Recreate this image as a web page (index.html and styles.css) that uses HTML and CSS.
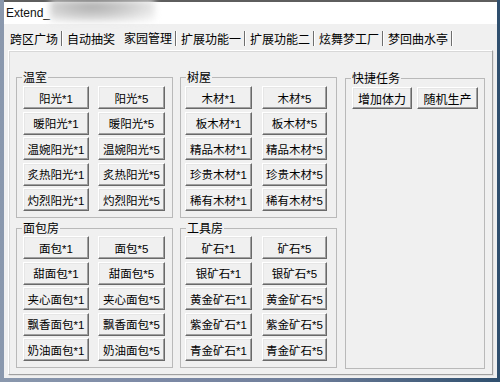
FILE: index.html
```html
<!DOCTYPE html>
<html lang="zh-CN">
<head>
<meta charset="utf-8">
<title>Extend</title>
<link rel="stylesheet" href="styles.css">
</head>
<body>
<div class="window">
  <div class="titlebar">
    <span class="title">Extend_</span>
    <span class="blur"></span>
  </div>
  <div class="tabs">
    <span class="tab sep">跨区广场</span>
    <span class="tab">自动抽奖</span>
    <span class="tab sel sep">家园管理</span>
    <span class="tab sep">扩展功能一</span>
    <span class="tab sep">扩展功能二</span>
    <span class="tab sep">炫舞梦工厂</span>
    <span class="tab sep">梦回曲水亭</span>
  </div>
  <div class="panel">
    <div class="col col1">
      <fieldset class="group g1">
        <legend>温室</legend>
        <div class="grid">
          <button class="btn">阳光*1</button><button class="btn">阳光*5</button>
          <button class="btn">暖阳光*1</button><button class="btn">暖阳光*5</button>
          <button class="btn">温婉阳光*1</button><button class="btn">温婉阳光*5</button>
          <button class="btn">炙热阳光*1</button><button class="btn">炙热阳光*5</button>
          <button class="btn">灼烈阳光*1</button><button class="btn">灼烈阳光*5</button>
        </div>
      </fieldset>
      <fieldset class="group g2">
        <legend>面包房</legend>
        <div class="grid">
          <button class="btn">面包*1</button><button class="btn">面包*5</button>
          <button class="btn">甜面包*1</button><button class="btn">甜面包*5</button>
          <button class="btn">夹心面包*1</button><button class="btn">夹心面包*5</button>
          <button class="btn">飘香面包*1</button><button class="btn">飘香面包*5</button>
          <button class="btn">奶油面包*1</button><button class="btn">奶油面包*5</button>
        </div>
      </fieldset>
    </div>
    <div class="col col2">
      <fieldset class="group g1">
        <legend>树屋</legend>
        <div class="grid">
          <button class="btn">木材*1</button><button class="btn">木材*5</button>
          <button class="btn">板木材*1</button><button class="btn">板木材*5</button>
          <button class="btn">精品木材*1</button><button class="btn">精品木材*5</button>
          <button class="btn">珍贵木材*1</button><button class="btn">珍贵木材*5</button>
          <button class="btn">稀有木材*1</button><button class="btn">稀有木材*5</button>
        </div>
      </fieldset>
      <fieldset class="group g2">
        <legend>工具房</legend>
        <div class="grid">
          <button class="btn">矿石*1</button><button class="btn">矿石*5</button>
          <button class="btn">银矿石*1</button><button class="btn">银矿石*5</button>
          <button class="btn">黄金矿石*1</button><button class="btn">黄金矿石*5</button>
          <button class="btn">紫金矿石*1</button><button class="btn">紫金矿石*5</button>
          <button class="btn">青金矿石*1</button><button class="btn">青金矿石*5</button>
        </div>
      </fieldset>
    </div>
    <fieldset class="group quick">
      <legend>快捷任务</legend>
      <div class="row">
        <button class="btn qb1">增加体力</button>
        <button class="btn qb2">随机生产</button>
      </div>
    </fieldset>
  </div>
</div>
</body>
</html>
```

FILE: styles.css
```css
* { box-sizing: border-box; }

html, body { margin: 0; }

body {
  width: 500px;
  height: 382px;
  overflow: hidden;
  background: linear-gradient(90deg, #8a98ad 0%, #7d8aa6 30%, #6f7e9a 60%, #2f4f6e 100%);
  font-family: "Liberation Sans", "Noto Sans CJK SC", sans-serif;
  font-size: 12px;
  color: #000;
}

.window {
  margin-left: 4px;
  width: 493px;
  height: 378px;
  background: #f0f0f0;
  display: flex;
  flex-direction: column;
}

.titlebar {
  height: 24px;
  flex: none;
  background: #fff;
  border-top: 2px solid #5e5e5e;
  display: flex;
  align-items: center;
  padding-left: 2px;
}

.title {
  font-family: "Liberation Sans", sans-serif;
  font-size: 12px;
  color: #111;
}

.blur {
  width: 105px;
  height: 22px;
  margin-top: -4px;
  background: radial-gradient(ellipse at 40% 30%, #b0b0b0 0%, #c9c9c9 35%, #e8e8e8 70%, rgba(255,255,255,0) 100%);
  filter: blur(3px);
}

.tabs {
  height: 26px;
  flex: none;
  padding: 7px 0 0 1px;
  display: flex;
  align-items: flex-start;
}

.tab {
  height: 15px;
  line-height: 15px;
  padding: 0 3px 0 5px;
  border-right: 1px solid transparent;
  white-space: nowrap;
  font-family: "Noto Sans CJK SC", sans-serif;
  font-size: 12px;
}

.tab.sep {
  border-right-color: #6e6e6e;
  box-shadow: 1px 0 0 #ffffff;
}

.tab.sel {
  line-height: 13px;
}

.panel {
  margin-left: 4px;
  width: 485px;
  height: 325px;
  flex: none;
  border: 1px solid #a8a8a8;
  border-color: #ffffff #a0a0a0 #a0a0a0 #ffffff;
  box-shadow: inset 1px 1px 0 #d8d8d8, 1px 1px 0 #e2e2e2;
  padding: 19px 0 0 7px;
  display: flex;
  column-gap: 7px;
  align-items: flex-start;
}

.col {
  width: 157px;
  display: flex;
  flex-direction: column;
  gap: 3px;
}

.group {
  margin: 0;
  padding: 0;
  min-width: 0;
  border: 1px solid #b9b9b9;
}

.group legend {
  margin-left: 5px;
  padding: 0 1px;
  line-height: 14px;
  font-size: 12px;
  font-family: "Noto Sans CJK SC", sans-serif;
}

.g1 {
  height: 148px;
  padding-top: 2px;
}

.g2 {
  height: 147px;
  padding-top: 1px;
}

.quick {
  width: 140px;
  height: 298px;
  margin-left: 1px;
  margin-top: 1px;
  padding-top: 2px;
}

.grid {
  display: grid;
  grid-template-columns: 66px 67px;
  grid-auto-rows: 23px;
  column-gap: 9px;
  row-gap: 2.5px;
  margin-left: 6px;
}

.col2 .grid {
  grid-template-columns: 67px 65px;
  column-gap: 10px;
  margin-left: 4px;
}

.row {
  display: flex;
  gap: 5px;
  margin-left: 6px;
}

.btn {
  font-family: "Liberation Sans", "Noto Sans CJK SC", sans-serif;
  font-size: 11.5px;
  color: #000;
  padding: 0;
  margin: 0;
  height: 23px;
  background: #f0f0f0;
  border: 1px solid;
  border-color: #ffffff #696969 #696969 #ffffff;
  box-shadow: inset -1px -1px 0 #a0a0a0, inset 1px 1px 0 #e6e6e6;
  display: flex;
  align-items: center;
  justify-content: center;
  white-space: nowrap;
}

.qb1, .qb2 { font-size: 12px; height: 22px; }
.qb1 { width: 60px; }
.qb2 { width: 61px; }
```
